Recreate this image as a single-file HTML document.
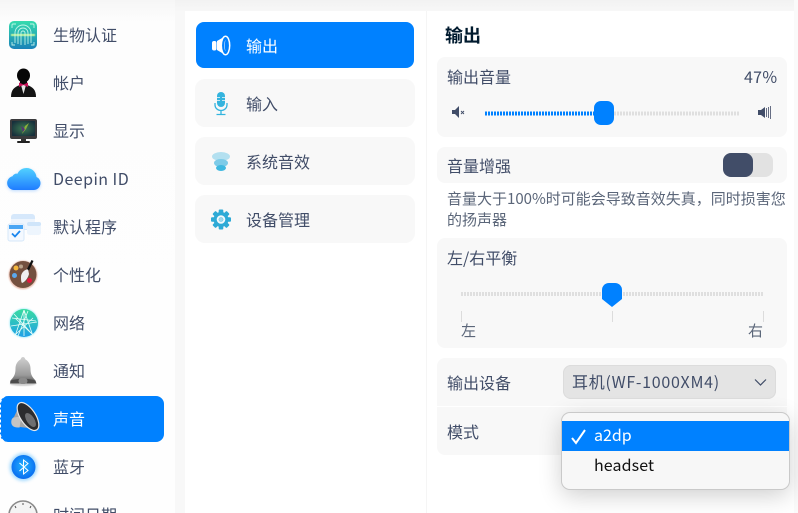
<!DOCTYPE html>
<html><head><meta charset="utf-8">
<style>
html,body{margin:0;padding:0;background:#fff;width:798px;height:513px;overflow:hidden}
#r{width:798px;height:513px;position:relative;overflow:hidden;font-family:"Noto Sans CJK SC","Liberation Sans",sans-serif;color:#414d68;font-size:16px}
.a{position:absolute}
.t{position:absolute;line-height:24px;white-space:nowrap}
.card{position:absolute;background:#f8f8f8;border-radius:8px}
svg{position:absolute;overflow:visible}
</style></head><body><div id="r">
<div class="a" style="left:0;top:0;width:798px;height:11px;background:linear-gradient(#f2f2f2,#f7f7f7)"></div>
<div class="a" style="left:0;top:0;width:175px;height:513px;background:linear-gradient(#f6f6f6 0,#fdfdfd 22px,#fefefe 100%)"></div>
<div class="a" style="left:175px;top:11px;width:10px;height:502px;background:#f8f8f8"></div>
<div class="a" style="left:185px;top:11px;width:241px;height:502px;background:#fff;border-radius:8px 0 0 0"></div>
<div class="a" style="left:426px;top:11px;width:1px;height:502px;background:#f5f5f5"></div>
<div class="a" style="left:427px;top:11px;width:367px;height:502px;background:#fff;border-radius:0 8px 0 0"></div>
<div class="a" style="left:794px;top:0;width:4px;height:513px;background:#fafafa"></div>

<!-- sidebar -->
<div class="a" style="left:0;top:396px;width:164px;height:46px;background:#0081ff;border-radius:8px;border-left:1px dashed #fff;box-sizing:border-box"></div>
<div class="t" style="left:53px;top:22px">生物认证</div>
<div class="t" style="left:53px;top:70px">帐户</div>
<div class="t" style="left:53px;top:118px">显示</div>
<div class="t" style="left:53px;top:166px;letter-spacing:.45px">Deepin ID</div>
<div class="t" style="left:53px;top:214px">默认程序</div>
<div class="t" style="left:53px;top:262px">个性化</div>
<div class="t" style="left:53px;top:310px">网络</div>
<div class="t" style="left:53px;top:358px">通知</div>
<div class="t" style="left:53px;top:406px;color:#fff">声音</div>
<div class="t" style="left:53px;top:454px">蓝牙</div>
<div class="t" style="left:53px;top:502px">时间日期</div>

<svg style="left:0;top:0" width="175" height="513" viewBox="0 0 175 513">
<defs>
<linearGradient id="g1" x1="0" y1="0" x2="0" y2="1"><stop offset="0" stop-color="#36dcae"/><stop offset="1" stop-color="#1a82b8"/></linearGradient>
<linearGradient id="g3" x1="0" y1="0" x2="0" y2="1"><stop offset="0" stop-color="#52d2ff"/><stop offset="1" stop-color="#1f7cff"/></linearGradient>
<linearGradient id="g7" x1="0" y1="0" x2="0" y2="1"><stop offset="0" stop-color="#38dca0"/><stop offset="1" stop-color="#1fa0e8"/></linearGradient>
<linearGradient id="g8" x1="0" y1="0" x2="0" y2="1"><stop offset="0" stop-color="#d0d0d0"/><stop offset=".7" stop-color="#9a9a9a"/><stop offset="1" stop-color="#555"/></linearGradient>
<radialGradient id="g9" cx=".5" cy=".45" r=".55"><stop offset="0" stop-color="#1fb4ff"/><stop offset="1" stop-color="#0a6cf0"/></radialGradient>
<radialGradient id="g2" cx=".5" cy=".5" r=".6"><stop offset="0" stop-color="#3d7a52"/><stop offset="1" stop-color="#17303c"/></radialGradient>
<filter id="b"><feGaussianBlur stdDeviation="1.5"/></filter>
<filter id="s"><feGaussianBlur stdDeviation=".6"/></filter>
</defs>
<!-- fingerprint -->
<rect x="9" y="21" width="28" height="28" rx="5" fill="url(#g1)"/>
<g filter="url(#s)" opacity=".95"><rect x="11" y="34" width="24" height="2" fill="#d6ff9a"/></g>
<g fill="none" stroke="#d8fff0" stroke-width=".9" opacity=".85">
<path d="M15 43V33a8 8 0 0 1 16 0V43"/><path d="M18 44V33a5 5 0 0 1 10 0V44"/><path d="M21 45V33a2 2 0 0 1 4 0V45"/>
<path d="M12 28v-3a1 1 0 0 1 1-1h3M30 24h3a1 1 0 0 1 1 1v3M34 42v3h-3M15 45h-3v-3"/>
</g>
<!-- account -->
<ellipse cx="23.500" cy="75.500" rx="6.500" ry="7" fill="#060606"/>
<rect x="20" y="80" width="7" height="5" fill="#0a0a0a"/>
<path d="M11 97c0-7 3-10 9-12h7c6 2 9 5 9 12z" fill="#141414"/>
<path d="M21 85l2.500 9 2.500-9z" fill="#e4e4e4"/>
<path d="M19 82.500l4.500 2 4.500-2v4.500l-4.500-2-4.500 2z" fill="#c8145a"/>
<!-- display -->
<rect x="10" y="119" width="27" height="20" rx="2" fill="#3a3a3c"/>
<rect x="12" y="121" width="23" height="15" fill="url(#g2)"/>
<path d="M22 134l3-8 4-3-3 6z" fill="#8bb03a"/><path d="M21 126l4 3-2 3z" fill="#5a2f78"/>
<rect x="21" y="139" width="5" height="2" fill="#333"/><rect x="17" y="141" width="13" height="2" rx="1" fill="#222"/>
<!-- cloud -->
<path d="M14 190a7 7 0 0 1-1.500-13.800c1-2 3-3 5-2.500 1.500-3.500 5-5.700 9-5.700 5.500 0 9.500 4 10 9 2.500 1 4 3.500 4 6 0 4-3 7-7 7z" fill="#7cb8ff" filter="url(#b)" opacity=".5" transform="translate(0,1)"/>
<path d="M14 190a7 7 0 0 1-1.500-13.800c1-2 3-3 5-2.500 1.500-3.500 5-5.700 9-5.700 5.500 0 9.500 4 10 9 2.500 1 4 3.500 4 6 0 4-3 7-7 7z" fill="url(#g3)"/>
<!-- default apps -->
<rect x="11" y="214" width="24" height="16" rx="3" fill="#d6e8fb"/>
<rect x="11" y="219" width="24" height="10" fill="#eef5fd"/>
<rect x="27" y="222" width="14" height="13" rx="2.500" fill="#edf5fd"/>
<rect x="27" y="222" width="14" height="4" rx="2" fill="#cfe5fa"/>
<rect x="8" y="224" width="16" height="17" rx="2" fill="#f4f9ff" stroke="#d6e8f9"/>
<rect x="9" y="225" width="14" height="4" fill="#4aa6f4"/>
<path d="M12 233.500l3 3 5-5.500" fill="none" stroke="#1a86ee" stroke-width="1.800"/>
<!-- personalize -->
<circle cx="23" cy="275" r="14.500" fill="#d88a70" opacity=".5" filter="url(#s)"/>
<circle cx="23" cy="274.500" r="13.500" fill="#74503f"/>
<circle cx="16" cy="268" r="2.500" fill="#f4b63c"/><circle cx="14.500" cy="275.500" r="2.500" fill="#5aa8ee"/><circle cx="21" cy="266.500" r="2" fill="#b8a18a"/><circle cx="29.500" cy="280.500" r="2.500" fill="#e4173e"/>
<path d="M28 269c-4 1-7 4-7 8 0 2 0 5 1 6 3-1 6-5 7-9z" fill="#f0f0f0"/><path d="M31.500 260l-4.500 9 2 1.500 4.500-9.500z" fill="#111"/>
<!-- network -->
<circle cx="24" cy="323" r="15" fill="#7fe8f8" opacity=".45" filter="url(#s)"/>
<circle cx="24" cy="323" r="14" fill="url(#g7)"/>
<g stroke="#eafff8" stroke-width=".8" fill="none"><path d="M24 310l-9 26M24 310l9 26M12 318l24 3M11 326l26-4M16 334l17-16M32 334l-17-16M24 310v26M14 314l18 20M28 311l-10 25"/></g>
<!-- bell -->
<ellipse cx="23" cy="384" rx="13" ry="2" fill="#000" opacity=".18" filter="url(#s)"/>
<path d="M23 357c-1.500 0-2 1.500-2.500 2.500-3 1.500-5 5-5 9 0 5-1 8-5 12-.5 1 0 2.500 1 2.500h23c1 0 1.500-1.500 1-2.500-4-4-5-7-5-12 0-4-2-7.500-5-9-.5-1-1-2.500-2.500-2.500z" fill="url(#g8)"/>
<path d="M10.500 381c4-3 21-3 25 0l1 2.500H10z" fill="#4c4c4c"/><rect x="18.500" y="378" width="9" height="6" rx="3" fill="#8a8a8a"/>
<!-- sound -->
<path d="M20 404l-6 13c-3 2-3 7 0 9 2 1.500 5 2 6 1l17 2z" fill="#a6a6a6"/>
<path d="M13.500 417.500a4 5 0 0 0 0 9c2 1 4 1 6 1l2-11z" fill="#c4c4c4"/>
<ellipse cx="28" cy="416.500" rx="7.500" ry="16" transform="rotate(-33.700 28 416.500)" fill="#2c2c2e" stroke="#e8e8e8" stroke-width="1.200"/>
<ellipse cx="30.500" cy="420" rx="3.800" ry="8" transform="rotate(-33.700 30.500 420)" fill="#6e6e70"/>
<!-- bluetooth -->
<circle cx="23.500" cy="467" r="14" fill="#4db8ff" opacity=".5" filter="url(#b)"/>
<circle cx="23.500" cy="467" r="12" fill="url(#g9)"/>
<path d="M19.500 463l8.500 7.500-4.500 3.500v-14l4.500 3.500-8.500 7.500" fill="none" stroke="#fff" stroke-width="1"/>
<!-- clock -->
<circle cx="23" cy="515" r="14" fill="#f4f4f4" stroke="#8a8a8a" stroke-width="1.600"/>
<path d="M23 503v2M15 506l1 2M31 506l-1 2" stroke="#555"/>
</svg>

<!-- middle list -->
<div class="a" style="left:196px;top:22px;width:218px;height:46px;background:#0081ff;border-radius:8px"></div>
<div class="card" style="left:195px;top:79px;width:220px;height:48px;border-radius:10px"></div>
<div class="card" style="left:195px;top:137px;width:220px;height:48px;border-radius:10px"></div>
<div class="card" style="left:195px;top:195px;width:220px;height:48px;border-radius:10px"></div>
<div class="t" style="left:246px;top:33px;color:#fff">输出</div>
<div class="t" style="left:246px;top:91px">输入</div>
<div class="t" style="left:246px;top:149px">系统音效</div>
<div class="t" style="left:246px;top:207px">设备管理</div>
<svg style="left:180px;top:0" width="60" height="250" viewBox="0 0 60 250">
<rect x="32" y="41" width="4.500" height="9.500" rx="2" fill="#fff"/>
<path d="M37 41l8.500-5 1.500 9.500-1.500 9.500-8.500-5z" fill="#fff"/>
<ellipse cx="45.500" cy="45.500" rx="4.200" ry="9.200" fill="#0081ff" stroke="#fff" stroke-width="1.500"/>
<path d="M45.500 40c-.8 2-.8 9 0 11-1.500-1-1.500-10 0-11z" fill="#fff"/>
<rect x="37" y="92" width="8" height="15" rx="4" fill="#34b4de"/>
<path d="M35 103v2a6 5.500 0 0 0 12 0v-2M41 111v3.500M36.500 114.500h9" fill="none" stroke="#34b4de" stroke-width="1.300"/>
<path d="M37 97.500h3M42 97.500h3M37 100.500h3M42 100.500h3" stroke="#f8f8f8" stroke-width=".8"/>
<ellipse cx="41" cy="156.500" rx="9" ry="4.500" fill="#b3e0f0"/>
<ellipse cx="41" cy="163" rx="7" ry="4" fill="#7dcbe8"/>
<ellipse cx="41" cy="168" rx="5" ry="3" fill="#3fb8e0"/>
<g transform="translate(41,219.500)">
<circle r="7.500" fill="#2eaad6"/>
<g fill="#2eaad6"><rect id="k" x="-2.300" y="-10" width="4.600" height="20" rx="1"/><rect x="-2.300" y="-10" width="4.600" height="20" rx="1" transform="rotate(45)"/><rect x="-2.300" y="-10" width="4.600" height="20" rx="1" transform="rotate(90)"/><rect x="-2.300" y="-10" width="4.600" height="20" rx="1" transform="rotate(135)"/></g>
<circle r="3.300" fill="none" stroke="#f4f9fb" stroke-width="2"/>
<circle r="2" fill="#9ed8ec"/>
</g>
</svg>

<!-- right -->
<div class="t" style="left:445px;top:23px;font-size:18px;font-weight:700;color:#001a2e">输出</div>
<div class="card" style="left:437px;top:57px;width:350px;height:80px"></div>
<div class="t" style="left:447px;top:64px">输出音量</div>
<div class="t" style="left:744px;top:64px;letter-spacing:.3px">47%</div>
<svg style="left:437px;top:57px" width="350" height="80" viewBox="0 0 350 80">
<path d="M15 53h3l4-4v12l-4-4h-3z" fill="#414d68"/>
<path d="M24 54l3 3M27 54l-3 3" stroke="#414d68" stroke-width=".9"/>
<line x1="48" y1="56.500" x2="164" y2="56.500" stroke="#0081ff" stroke-width="4" stroke-dasharray="2 1"/>
<line x1="168" y1="56.500" x2="302" y2="56.500" stroke="#dfdfdf" stroke-width="4" stroke-dasharray="2 1"/>
<rect x="157" y="44" width="20" height="24" rx="7" fill="#0081ff"/>
<path d="M321 53h3l4-3v11l-4-3h-3z" fill="#414d68"/>
<path d="M329.500 51v9M331.500 50v11M333.500 49v13" stroke="#414d68" stroke-width=".8"/>
</svg>

<div class="card" style="left:437px;top:147px;width:350px;height:36px"></div>
<div class="t" style="left:447px;top:153px">音量增强</div>
<div class="a" style="left:723px;top:153px;width:50px;height:24px;background:#e2e2e2;border-radius:8px"></div>
<div class="a" style="left:723px;top:153px;width:30px;height:24px;background:#414d68;border-radius:8px"></div>
<div class="t" style="left:447px;top:188px;width:345px;line-height:21px;white-space:normal;color:#5b6679;font-size:15px">音量大于100%时可能会导致音效失真，同时损害您的扬声器</div>

<div class="card" style="left:437px;top:238px;width:350px;height:110px"></div>
<div class="t" style="left:447px;top:245px">左/右平衡</div>
<svg style="left:437px;top:238px" width="350" height="110" viewBox="0 0 350 110">
<line x1="24" y1="56" x2="326" y2="56" stroke="#dfdfdf" stroke-width="4" stroke-dasharray="2 1"/>
<path d="M165 52a7 7 0 0 1 7-7h6a7 7 0 0 1 7 7v9l-10 8-10-8z" fill="#0081ff"/>
<path d="M24.500 73v11M175.500 73v11M326.500 73v11" stroke="#dcdcdc" stroke-width="1"/>
</svg>
<div class="t" style="left:461px;top:319px;font-size:15px;color:#5b6679">左</div>
<div class="t" style="left:748px;top:319px;font-size:15px;color:#5b6679">右</div>

<div class="card" style="left:437px;top:358px;width:350px;height:97px"></div>
<div class="a" style="left:437px;top:406px;width:350px;height:1px;background:#fff"></div>
<div class="t" style="left:447px;top:370px">输出设备</div>
<div class="t" style="left:447px;top:419px">模式</div>
<div class="a" style="left:563px;top:365px;width:213px;height:34px;background:#e4e4e4;border-radius:8px;box-shadow:inset 0 0 0 1px #dcdcdc"></div>
<div class="t" style="left:572px;top:369px;letter-spacing:.72px">耳机(WF-1000XM4)</div>
<svg style="left:754px;top:378px" width="14" height="9" viewBox="0 0 14 9"><path d="M1 1.500l5.500 5.500 5.500-5.500" fill="none" stroke="#414d68" stroke-width="1.200"/></svg>

<div class="a" style="left:562px;top:413px;width:227px;height:76px;background:#f7f7f7;border-radius:8px;box-shadow:0 0 0 1px #c9c9c9,0 6px 24px rgba(0,0,0,.2);overflow:hidden"></div>
<div class="a" style="left:562px;top:421px;width:227px;height:30px;background:#0081ff"></div>
<svg style="left:570px;top:428px" width="18" height="18" viewBox="0 0 18 18"><path d="M2 10l4 5 9-13" fill="none" stroke="#fff" stroke-width="2"/></svg>
<div class="t" style="left:594px;top:422px;color:#fff">a2dp</div>
<div class="t" style="left:594px;top:452px;color:#111;letter-spacing:.1px">headset</div>
</div></body></html>
